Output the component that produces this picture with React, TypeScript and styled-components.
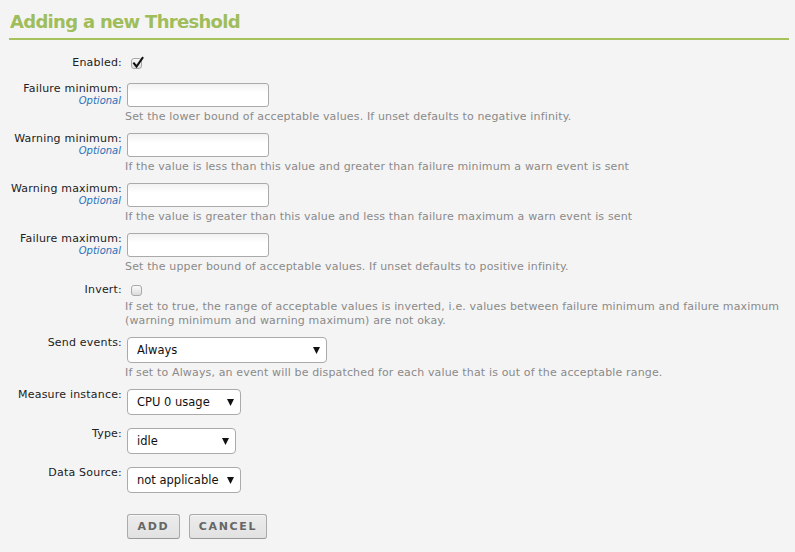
import React from "react";
import styled, { createGlobalStyle } from "styled-components";

const Global = createGlobalStyle`
  html, body { margin: 0; padding: 0; background: #f4f4f4; }
  body { font-family: "DejaVu Sans", Verdana, sans-serif; color: #222; }
  * { box-sizing: border-box; }
`;

const Page = styled.div`
  width: 795px;
  height: 552px;
  padding: 0 6px 0 9px;
  overflow: hidden;
`;

const Title = styled.h2`
  margin: 0;
  padding: 10px 0 4px 1px;
  font-size: 18px;
  line-height: 24px;
  font-weight: bold;
  letter-spacing: -0.7px;
  color: #9fbd5b;
  border-bottom: 2px solid #a5c25c;
`;

const Form = styled.form`
  display: flex;
  flex-direction: column;
  gap: 9px;
  padding-top: 16px;
`;

const Row = styled.div<{ $extra?: number }>`
  display: grid;
  grid-template-columns: 113px 1fr;
  column-gap: 5px;
  padding-bottom: ${(p) => p.$extra ?? 0}px;
`;

const LabelCell = styled.div<{ $top?: number }>`
  text-align: right;
  font-size: 11px;
  line-height: 12px;
  letter-spacing: 0.2px;
  padding-top: ${(p) => p.$top ?? 0}px;
  color: #222;
`;

const Optional = styled.div`
  font-size: 10px;
  font-style: italic;
  color: #2a70b8;
  line-height: 12px;
  letter-spacing: 0;
  padding-right: 1px;
`;

const FieldCell = styled.div`
  display: flex;
  flex-direction: column;
  align-items: flex-start;
`;

const Help = styled.div`
  font-size: 11px;
  line-height: 14px;
  letter-spacing: 0.15px;
  color: #8a8a8a;
  margin-top: 3px;
  margin-left: -2px;
`;

const TextInput = styled.input`
  width: 142px;
  height: 24px;
  border: 1px solid #aaa;
  border-radius: 3px;
  background: linear-gradient(#f2f2f2, #ffffff 40%);
  padding: 2px 5px;
  font: inherit;
  font-size: 11px;
`;

const CheckBox = styled.span`
  position: relative;
  display: inline-block;
  width: 11px;
  height: 11px;
  margin: 2px 0 1px 4px;
  border: 1px solid #a8a8a8;
  border-radius: 3px;
  background: linear-gradient(#fafafa, #dcdcdc);
`;

const CheckMark = styled.svg`
  position: absolute;
  left: 0px;
  top: -3px;
`;

const SelectWrap = styled.div<{ $w: number }>`
  position: relative;
  width: ${(p) => p.$w}px;
  height: 26px;
`;

const Select = styled.select`
  appearance: none;
  -webkit-appearance: none;
  width: 100%;
  height: 100%;
  border: 1px solid #aaa;
  border-radius: 4px;
  background: #fff;
  padding: 0 0 0 9px;
  font-family: "DejaVu Sans", Verdana, sans-serif;
  font-size: 11.5px;
  color: #111;
`;

const Arrow = styled.svg`
  position: absolute;
  right: 7px;
  top: 10px;
  pointer-events: none;
`;

const Buttons = styled.div`
  display: flex;
  gap: 9px;
`;

const Button = styled.button<{ $w: number }>`
  width: ${(p) => p.$w}px;
  height: 25px;
  border: 1px solid #aaa;
  border-bottom-color: #999;
  border-radius: 3px;
  background: linear-gradient(#ececec, #e2e2e2);
  font-family: "DejaVu Sans", Verdana, sans-serif;
  font-weight: bold;
  font-size: 11px;
  letter-spacing: 1.7px;
  color: #666;
  padding: 0;
  box-shadow: inset 0 1px 0 #f6f6f6;
`;

const Check: React.FC<{ checked?: boolean }> = ({ checked }) => (
  <CheckBox>
    {checked && (
      <CheckMark width="12" height="13" viewBox="0 0 12 13">
        <path d="M2 7.5 L4.5 10.5 L10.5 2" fill="none" stroke="#111" strokeWidth="2" strokeLinecap="square" />
      </CheckMark>
    )}
  </CheckBox>
);

const Dropdown: React.FC<{ w: number; value: string }> = ({ w, value }) => (
  <SelectWrap $w={w}>
    <Select defaultValue={value}>
      <option>{value}</option>
    </Select>
    <Arrow width="7" height="7" viewBox="0 0 7 7">
      <path d="M0 0 H7 L3.5 7 Z" fill="#111" />
    </Arrow>
  </SelectWrap>
);

const textRows = [
  { label: "Failure minimum:", help: "Set the lower bound of acceptable values. If unset defaults to negative infinity." },
  { label: "Warning minimum:", help: "If the value is less than this value and greater than failure minimum a warn event is sent" },
  { label: "Warning maximum:", help: "If the value is greater than this value and less than failure maximum a warn event is sent" },
  { label: "Failure maximum:", help: "Set the upper bound of acceptable values. If unset defaults to positive infinity." },
];

export default function App() {
  return (
    <Page>
      <Global />
      <Title>Adding a new Threshold</Title>
      <Form onSubmit={(e) => e.preventDefault()}>
        <Row $extra={4}>
          <LabelCell $top={1}>Enabled:</LabelCell>
          <FieldCell>
            <Check checked />
          </FieldCell>
        </Row>
        {textRows.map((r) => (
          <Row key={r.label}>
            <LabelCell $top={0}>
              {r.label}
              <Optional>Optional</Optional>
            </LabelCell>
            <FieldCell>
              <TextInput type="text" />
              <Help>{r.help}</Help>
            </FieldCell>
          </Row>
        ))}
        <Row>
          <LabelCell $top={1}>Invert:</LabelCell>
          <FieldCell>
            <Check />
            <Help>
              If set to true, the range of acceptable values is inverted, i.e. values between failure minimum and failure maximum
              (warning minimum and warning maximum) are not okay.
            </Help>
          </FieldCell>
        </Row>
        <Row>
          <LabelCell>Send events:</LabelCell>
          <FieldCell>
            <Dropdown w={200} value="Always" />
            <Help>If set to Always, an event will be dispatched for each value that is out of the acceptable range.</Help>
          </FieldCell>
        </Row>
        <Row $extra={4}>
          <LabelCell>Measure instance:</LabelCell>
          <FieldCell>
            <Dropdown w={114} value="CPU 0 usage" />
          </FieldCell>
        </Row>
        <Row $extra={4}>
          <LabelCell>Type:</LabelCell>
          <FieldCell>
            <Dropdown w={109} value="idle" />
          </FieldCell>
        </Row>
        <Row $extra={12}>
          <LabelCell>Data Source:</LabelCell>
          <FieldCell>
            <Dropdown w={114} value="not applicable" />
          </FieldCell>
        </Row>
        <Row>
          <span />
          <Buttons>
            <Button type="button" $w={53}>ADD</Button>
            <Button type="button" $w={78}>CANCEL</Button>
          </Buttons>
        </Row>
      </Form>
    </Page>
  );
}
